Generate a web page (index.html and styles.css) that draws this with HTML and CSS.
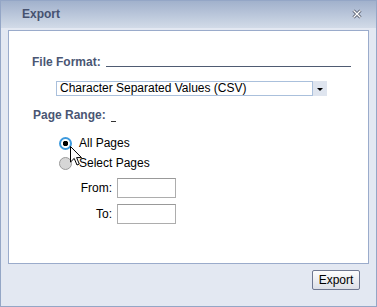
FILE: index.html
```html
<!DOCTYPE html>
<html lang="en">
<head>
  <meta charset="UTF-8" />
  <title>Export</title>
  <link rel="stylesheet" href="styles.css">
</head>
<body>
  <div class="dialog">
    <div class="titlebar">
      <span class="title">Export</span>
      <svg class="close" width="10" height="10" viewBox="0 0 10 10">
        <path d="M1.5 1.5 L8.5 8.5 M8.5 1.5 L1.5 8.5" stroke="#4e5566" stroke-width="3" />
        <path d="M1.5 1.5 L8.5 8.5 M8.5 1.5 L1.5 8.5" stroke="#ffffff" stroke-width="1.4" />
      </svg>
    </div>

    <div class="panel">
      <div class="field-row">
        <span class="label">File Format:</span>
        <span class="rule"></span>
      </div>

      <div class="select">
        <span class="select-text">Character Separated Values (CSV)</span>
        <span class="select-btn"><i class="caret"></i></span>
      </div>

      <div class="field-row range">
        <span class="label">Page Range:</span>
        <span class="rule short"></span>
      </div>

      <div class="options">
        <div class="radio-row"><span class="radio checked"></span>All Pages</div>
        <div class="radio-row"><span class="radio"></span>Select Pages</div>
        <div class="page-field"><span class="page-label">From:</span><span class="box"></span></div>
        <div class="page-field"><span class="page-label">To:</span><span class="box"></span></div>
      </div>

      <!-- mouse pointer over the radios -->
      <svg class="cursor" width="13" height="21" viewBox="0 0 13 21">
        <path d="M0.5 0.5 L0.5 16 L4.2 12.4 L7 19 L9.3 18 L6.6 11.6 L11.5 11.6 Z" fill="#fff" stroke="#000" stroke-width="1" />
      </svg>
    </div>

    <div class="footer">
      <button class="btn">Export</button>
    </div>
  </div>
</body>
</html>
```

FILE: styles.css
```css
* {
  box-sizing: border-box;
  margin: 0;
  padding: 0;
}

body {
  font-family: "Liberation Sans", Arial, sans-serif;
  font-size: 12px;
  color: #000;
  background: #fff;
}

.dialog {
  width: 377px;
  height: 307px;
  border: 1px solid #94a6c6;
  background: #e3e8f2;
  display: flex;
  flex-direction: column;
}

.titlebar {
  height: 27px;
  display: flex;
  align-items: center;
  justify-content: space-between;
  padding: 0 14px 1px 21px;
  background: linear-gradient(to bottom, #a1b1cc, #d2dbe8);
}

.title {
  font-weight: bold;
  color: #465270;
}

.close {
  display: block;
}

.panel {
  position: relative;
  height: 234px;
  margin: 2px 7px 0 7px;
  border: 1px solid #9aabcb;
  background: #fff;
  padding: 24px 17px 0 23px;
}

.field-row {
  display: flex;
  height: 14px;
  line-height: 14px;
}

.label {
  font-weight: bold;
  color: #4a5673;
}

.rule {
  flex: 1;
  height: 12px;
  margin-left: 5px;
  border-bottom: 1px solid #4f5b72;
}

.rule.short {
  flex: none;
  width: 5px;
  height: 14px;
  margin-left: 5px;
  border-bottom-color: #333;
}

.select {
  display: flex;
  width: 271px;
  height: 15px;
  margin: 12px 0 0 24px;
}

.select-text {
  width: 257px;
  border: 1px solid #aac0dc;
  padding-left: 3px;
  line-height: 13px;
}

.select-btn {
  width: 14px;
  background: #dfe5ef;
  display: flex;
  align-items: center;
  justify-content: center;
}

.caret {
  width: 0;
  height: 0;
  border-left: 3px solid transparent;
  border-right: 3px solid transparent;
  border-top: 3px solid #000;
  margin-top: 1px;
}

.range {
  margin: 12px 0 0 1px;
}

.options {
  margin-top: 11px;
}

.radio-row {
  display: flex;
  align-items: center;
  height: 20px;
  padding-left: 27px;
}

.radio {
  width: 13px;
  height: 13px;
  margin-right: 7px;
  border-radius: 50%;
  border: 1px solid #9a9a9a;
  background: #d6d6d6;
}

.radio.checked {
  border: 2px solid #3d9ade;
  background: radial-gradient(circle, #000 0 2.5px, #fff 3px);
}

.page-field {
  display: flex;
  align-items: center;
  height: 20px;
  margin: 5px 0 0 48px;
}

.page-field + .page-field {
  margin-top: 6px;
}

.page-label {
  width: 32px;
  text-align: right;
  margin-right: 5px;
}

.box {
  width: 59px;
  height: 20px;
  border: 1px solid #adadad;
  border-top-color: #999;
  background: #fff;
}

.cursor {
  position: absolute;
  left: 61px;
  top: 115px;
}

.footer {
  display: flex;
  justify-content: flex-end;
  padding: 6px 16px 0 0;
}

.btn {
  width: 48px;
  height: 20px;
  font-family: "Liberation Sans", Arial, sans-serif;
  font-size: 12px;
  color: #000;
  border: 1px solid #6f7890;
  border-radius: 2px;
  background: linear-gradient(to bottom, #fdfdfd, #dcdfe7);
}
```
